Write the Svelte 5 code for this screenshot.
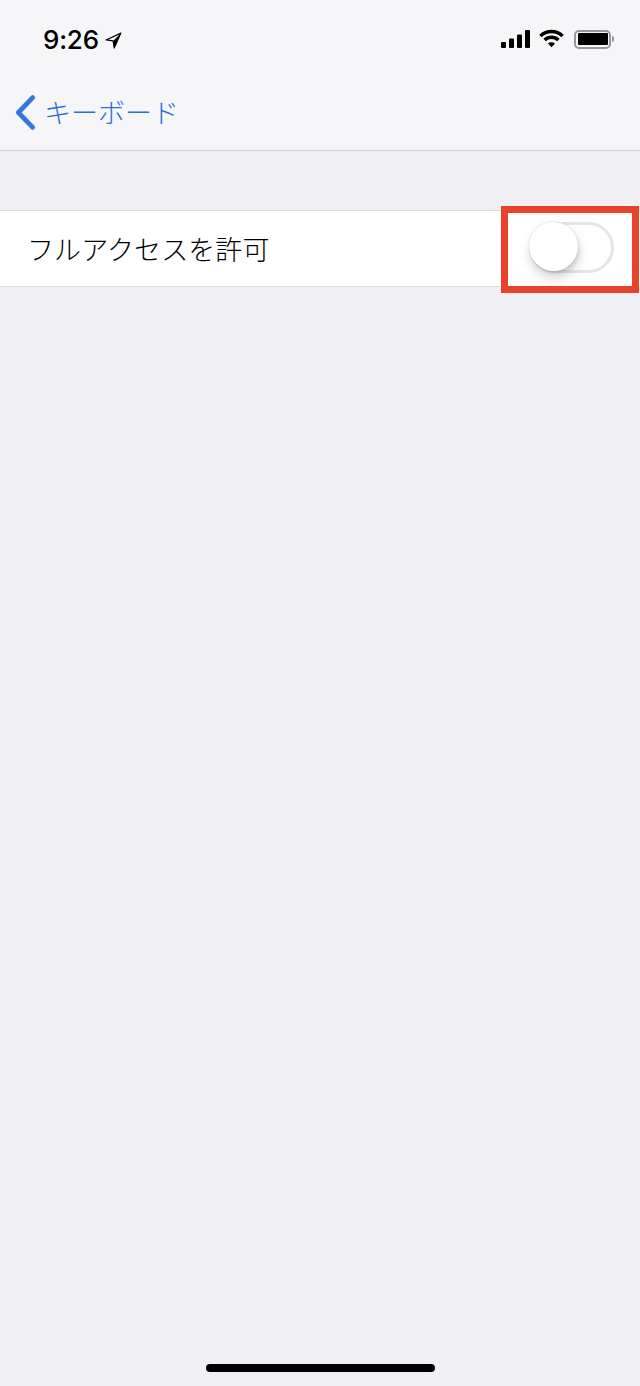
<script lang="ts">
  let fullAccess = $state(false);
</script>

<div class="screen">
  <header class="top">
    <div class="status">
      <div class="clock">
        <span class="time">9:26</span>
        <svg class="arrow" viewBox="0 0 18 18" aria-hidden="true">
          <path d="M16.8 1.2 1.2 8.4l7.4 1 1.2 7.6Z" fill="none" stroke="#000" stroke-width="1.2" stroke-linejoin="round" />
          <path d="M16.8 1.2 8.6 9.4l1.2 7.6Z" fill="#000" />
        </svg>
      </div>
      <div class="indicators">
        <svg class="signal" viewBox="0 0 30 18" aria-hidden="true">
          <rect x="0" y="12" width="5" height="6" rx="1" />
          <rect x="8" y="8.5" width="5" height="9.5" rx="1" />
          <rect x="16" y="4.5" width="5" height="13.5" rx="1" />
          <rect x="24" y="0" width="5" height="18" rx="1" />
        </svg>
        <svg class="wifi" viewBox="0 0 26 19" aria-hidden="true">
          <path d="M1.5 6.8C7.8.8 18.2.8 24.5 6.8" />
          <path d="M5.8 11C9.9 7.2 16.1 7.2 20.2 11" />
          <path d="M13 18.6 9.3 14.7c2.1-1.8 5.3-1.8 7.4 0Z" class="dot" />
        </svg>
        <div class="battery">
          <div class="cell"><div class="charge"></div></div>
          <div class="cap"></div>
        </div>
      </div>
    </div>
    <nav class="bar">
      <button class="back">
        <svg viewBox="0 0 24 38" aria-hidden="true">
          <path d="M19.5 3.5 4.5 19l15 15.5" />
        </svg>
        <span>キーボード</span>
      </button>
    </nav>
  </header>

  <main class="content">
    <section class="group">
      <span class="label">フルアクセスを許可</span>
      <button
        class="toggle"
        class:on={fullAccess}
        role="switch"
        aria-checked={fullAccess}
        aria-label="フルアクセスを許可"
        onclick={() => (fullAccess = !fullAccess)}
      >
        <span class="knob"></span>
      </button>
      <div class="callout"></div>
    </section>
  </main>

  <div class="home"></div>
</div>

<style>
  :global(body) {
    margin: 0;
    background: #efeff4;
  }

  .screen {
    position: relative;
    width: 640px;
    height: 1386px;
    overflow: hidden;
    background: #efeff4;
    font-family: "Noto Sans CJK JP", "Liberation Sans", sans-serif;
    font-weight: 300;
    color: #000;
  }

  .top {
    height: 150px;
    background: #f6f6f9;
    border-bottom: 1px solid #cfcfd4;
  }

  .status {
    height: 74px;
    display: flex;
    justify-content: space-between;
    align-items: center;
    padding: 4px 26px 0 43px;
    box-sizing: border-box;
  }

  .clock {
    display: flex;
    align-items: center;
    gap: 6px;
  }

  .time {
    font-family: Inter, "Liberation Sans", sans-serif;
    font-size: 26px;
    font-weight: 500;
    letter-spacing: -0.2px;
  }

  .arrow {
    width: 17px;
    height: 17px;
    margin-top: 3px;
  }

  .indicators {
    display: flex;
    align-items: center;
    gap: 8px;
  }

  .signal {
    width: 30px;
    height: 18px;
    fill: #000;
  }

  .wifi {
    width: 25px;
    height: 19px;
    margin-top: -2px;
    fill: none;
    stroke: #000;
    stroke-width: 3.6;
  }

  .wifi .dot {
    fill: #000;
    stroke: none;
  }

  .battery {
    display: flex;
    align-items: center;
    gap: 1px;
    margin-left: 2px;
  }

  .cell {
    width: 37px;
    height: 19px;
    box-sizing: border-box;
    border: 2px solid #98989a;
    border-radius: 5px;
    padding: 1.5px;
  }

  .charge {
    height: 100%;
    background: #000;
    border-radius: 1px;
  }

  .cap {
    width: 2px;
    height: 6px;
    background: #98989a;
    border-radius: 0 2px 2px 0;
  }

  .bar {
    height: 76px;
    display: flex;
    align-items: center;
    padding-left: 14px;
  }

  .back {
    display: flex;
    align-items: center;
    gap: 7px;
    padding: 0;
    border: 0;
    background: none;
    font: inherit;
    font-size: 27px;
    line-height: 36px;
    color: #2c6fd4;
  }

  .back svg {
    width: 23px;
    height: 37px;
    fill: none;
    stroke: #3478de;
    stroke-width: 5;
    stroke-linecap: round;
    stroke-linejoin: round;
  }

  .content {
    padding-top: 59px;
  }

  .group {
    position: relative;
    height: 75px;
    display: flex;
    align-items: center;
    justify-content: space-between;
    padding: 0 26px 0 27px;
    background: #fff;
    border-top: 1px solid #dcdce0;
    border-bottom: 1px solid #dcdce0;
  }

  .label {
    font-size: 27px;
    line-height: 36px;
    letter-spacing: 0.1px;
    color: #000;
  }

  .toggle {
    position: relative;
    width: 85px;
    height: 51px;
    padding: 0;
    margin-top: -2px;
    box-sizing: border-box;
    border: 3px solid #e6e6e8;
    border-radius: 26px;
    background: #fff;
  }

  .toggle.on {
    background: #4cd964;
    border-color: #4cd964;
  }

  .knob {
    position: absolute;
    left: -3px;
    top: -3px;
    width: 49px;
    height: 49px;
    border-radius: 50%;
    background: #fff;
    box-shadow: 0 0 2px rgba(0, 0, 0, 0.14), 1px 7px 12px rgba(0, 0, 0, 0.16), 2px 3px 3px rgba(0, 0, 0, 0.07);
  }

  .toggle.on .knob {
    left: auto;
    right: -3px;
  }

  .callout {
    position: absolute;
    left: 501px;
    top: -5px;
    width: 138px;
    height: 87px;
    box-sizing: border-box;
    border: 7px solid #e8432a;
    pointer-events: none;
  }

  .home {
    position: absolute;
    left: 206px;
    top: 1364px;
    width: 229px;
    height: 8px;
    border-radius: 4px;
    background: #000;
  }
</style>
